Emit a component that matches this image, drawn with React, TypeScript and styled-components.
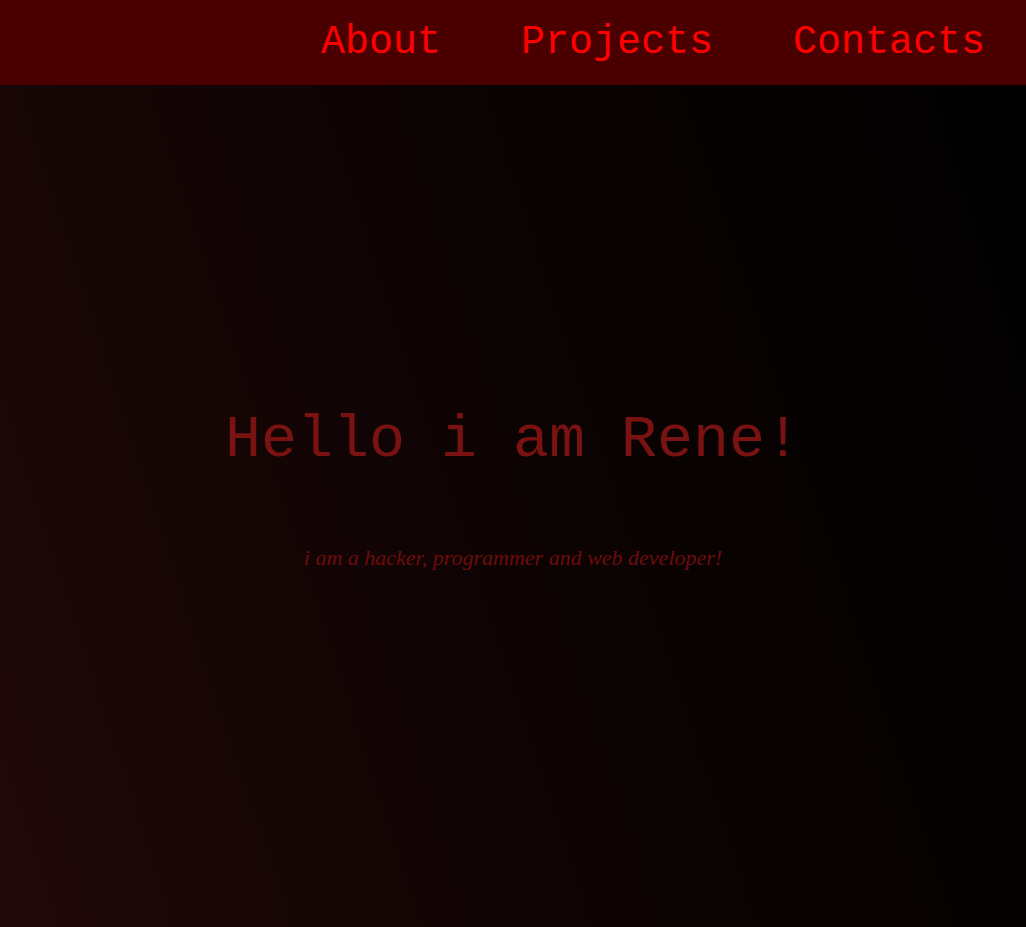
import React from "react";
import styled, { createGlobalStyle } from "styled-components";

const Global = createGlobalStyle`
  html, body { margin: 0; padding: 0; height: 100%; }
  body { background: #000; }
  #root { min-height: 100vh; }
`;

const mono = `"Courier New", Courier, "Nimbus Mono PS", "Nimbus Mono L", FreeMono, "Liberation Mono", monospace`;

const Page = styled.div`
  min-height: 100vh;
  display: flex;
  flex-direction: column;
  background: linear-gradient(72deg, #200808 0%, #0d0303 50%, #000 100%);
`;

const Header = styled.header`
  height: 85px;
  background: #4a0000;
  display: flex;
  align-items: center;
  justify-content: flex-end;
  padding-right: 41px;
`;

const Nav = styled.nav`
  display: flex;
  gap: 80px;
`;

const NavLink = styled.a`
  font-family: ${mono};
  font-size: 40px;
  line-height: 1;
  color: #ff0000;
  text-decoration: none;
`;

const Main = styled.main`
  flex: 1;
  display: flex;
  flex-direction: column;
  align-items: center;
  padding-top: 325px;
`;

const Title = styled.h1`
  margin: 0;
  font-family: ${mono};
  font-weight: normal;
  font-size: 60px;
  line-height: 60px;
  color: #7a1212;
`;

const Subtitle = styled.p`
  margin: 75px 0 0;
  font-family: "Liberation Serif", "Times New Roman", serif;
  font-style: italic;
  font-size: 22px;
  line-height: 26px;
  color: #6e0c0c;
`;

export default function App() {
  return (
    <Page>
      <Global />
      <Header>
        <Nav>
          <NavLink href="#about">About</NavLink>
          <NavLink href="#projects">Projects</NavLink>
          <NavLink href="#contacts">Contacts</NavLink>
        </Nav>
      </Header>
      <Main>
        <Title>Hello i am Rene!</Title>
        <Subtitle>i am a hacker, programmer and web developer!</Subtitle>
      </Main>
    </Page>
  );
}
